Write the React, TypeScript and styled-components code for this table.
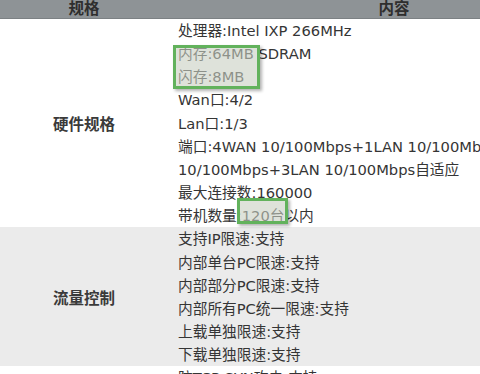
import React from "react";
import styled, { createGlobalStyle } from "styled-components";

const GlobalStyle = createGlobalStyle`
  html, body {
    margin: 0;
    padding: 0;
    background: #ffffff;
    overflow: hidden;
  }
  body {
    font-family: "DejaVu Sans", "Noto Sans CJK SC", sans-serif;
    color: #333333;
  }
`;

const Page = styled.div`
  position: relative;
  width: 620px;
`;

const Table = styled.div`
  display: flex;
  flex-direction: column;
  width: 620px;
`;

const HeaderRow = styled.div`
  display: grid;
  grid-template-columns: 168px 1fr;
  height: 18px;
  background: #8e9396;
  border-bottom: 1px solid #7c8184;
`;

const HeaderCell = styled.div`
  display: flex;
  align-items: center;
  justify-content: center;
  font-size: 15.5px;
  font-weight: bold;
  color: #2e2e2e;
  line-height: 18px;
`;

const SpecRow = styled.div<{ $shade?: boolean }>`
  display: grid;
  grid-template-columns: 168px 1fr;
  background: ${(p) => (p.$shade ? "#ebebeb" : "#ffffff")};
`;

const Label = styled.div`
  display: flex;
  align-items: center;
  justify-content: center;
  font-size: 15.5px;
  font-weight: bold;
  color: #3a3a3a;
`;

const Items = styled.div`
  display: flex;
  flex-direction: column;
  padding-left: 10px;
`;

const Line = styled.div`
  font-size: 14.7px;
  line-height: 23.15px;
  white-space: nowrap;
  color: #353535;
`;

const Highlight = styled.div<{ $top: number; $left: number; $w: number; $h: number }>`
  position: absolute;
  top: ${(p) => p.$top}px;
  left: ${(p) => p.$left}px;
  width: ${(p) => p.$w}px;
  height: ${(p) => p.$h}px;
  box-sizing: border-box;
  border: 3px solid #62b25c;
  background: rgba(200, 206, 194, 0.6);
  box-shadow: 2px 2px 3px rgba(0, 0, 0, 0.3);
  pointer-events: none;
`;

const rows: { label: string; shade: boolean; lines: string[] }[] = [
  {
    label: "硬件规格",
    shade: false,
    lines: [
      "处理器:Intel IXP 266MHz",
      "内存:64MB SDRAM",
      "闪存:8MB",
      "Wan口:4/2",
      "Lan口:1/3",
      "端口:4WAN 10/100Mbps+1LAN 10/100Mbps或2WAN",
      "10/100Mbps+3LAN 10/100Mbps自适应",
      "最大连接数:160000",
      "带机数量:120台以内",
    ],
  },
  {
    label: "流量控制",
    shade: true,
    lines: [
      "支持IP限速:支持",
      "内部单台PC限速:支持",
      "内部部分PC限速:支持",
      "内部所有PC统一限速:支持",
      "上载单独限速:支持",
      "下载单独限速:支持",
    ],
  },
  {
    label: "安全防护",
    shade: false,
    lines: ["防TCP SYN攻击:支持", "防UDP攻击:支持", "防ICMP攻击:支持"],
  },
];

export default function App() {
  return (
    <>
      <GlobalStyle />
      <Page>
        <Table>
          <HeaderRow>
            <HeaderCell>规格</HeaderCell>
            <HeaderCell>内容</HeaderCell>
          </HeaderRow>
          {rows.map((r) => (
            <SpecRow key={r.label} $shade={r.shade}>
              <Label>{r.label}</Label>
              <Items>
                {r.lines.map((l) => (
                  <Line key={l}>{l}</Line>
                ))}
              </Items>
            </SpecRow>
          ))}
        </Table>
        <Highlight $top={45} $left={173} $w={87} $h={44} />
        <Highlight $top={198} $left={237} $w={51} $h={26} />
      </Page>
    </>
  );
}
